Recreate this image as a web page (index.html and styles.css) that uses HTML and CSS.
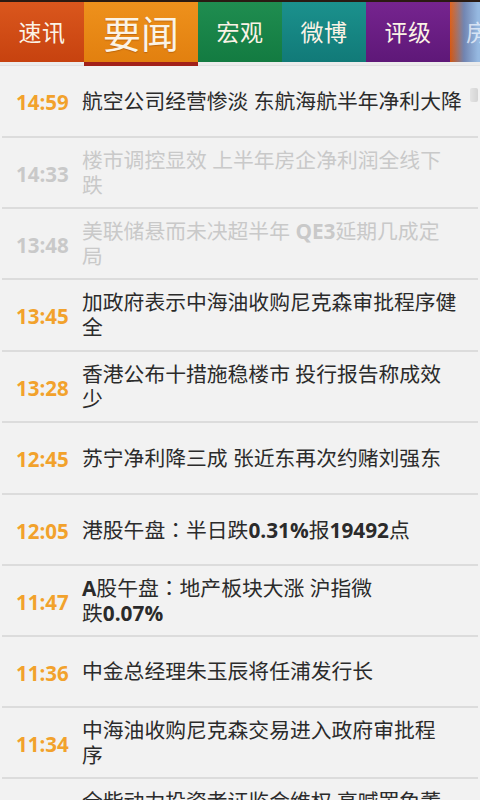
FILE: index.html
```html
<!DOCTYPE html>
<html lang="zh">
<head>
<meta charset="utf-8">
<link rel="stylesheet" href="styles.css">
</head>
<body>
<div class="screen">
  <nav class="tabs">
    <div class="tab t-sx">速讯</div>
    <div class="tab t-yw active">要闻</div>
    <div class="tab t-hg">宏观</div>
    <div class="tab t-wb">微博</div>
    <div class="tab t-pj">评级</div>
    <div class="tab t-more">房产</div>
  </nav>
  <div class="underbar"><span class="marker"></span></div>
  <ul class="list">
    <li class="row"><span class="time">14:59</span><span class="title">航空公司经营惨淡 东航海航半年净利大降</span><span class="scroll"></span></li>
    <li class="row read"><span class="time">14:33</span><span class="title">楼市调控显效 上半年房企净利润全线下<br>跌</span></li>
    <li class="row read"><span class="time">13:48</span><span class="title">美联储悬而未决超半年 <b>QE3</b>延期几成定<br>局</span></li>
    <li class="row"><span class="time">13:45</span><span class="title">加政府表示中海油收购尼克森审批程序健<br>全</span></li>
    <li class="row"><span class="time">13:28</span><span class="title">香港公布十措施稳楼市 投行报告称成效<br>少</span></li>
    <li class="row"><span class="time">12:45</span><span class="title">苏宁净利降三成 张近东再次约赌刘强东</span></li>
    <li class="row"><span class="time">12:05</span><span class="title">港股午盘<span class="colon" lang="ja">：</span>半日跌<b>0.31%</b>报<b>19492</b>点</span></li>
    <li class="row"><span class="time">11:47</span><span class="title"><b>A</b>股午盘<span class="colon" lang="ja">：</span>地产板块大涨 沪指微<br>跌<b>0.07%</b></span></li>
    <li class="row"><span class="time">11:36</span><span class="title">中金总经理朱玉辰将任浦发行长</span></li>
    <li class="row"><span class="time">11:34</span><span class="title">中海油收购尼克森交易进入政府审批程<br>序</span></li>
    <li class="row"><span class="time">11:20</span><span class="title">全柴动力投资者证监会维权 高喊罢免董<br>事长</span></li>
  </ul>
</div>
</body>
</html>
```

FILE: styles.css
```css
* { box-sizing: border-box; }
html, body { margin: 0; padding: 0; }
body {
  width: 480px;
  height: 800px;
  overflow: hidden;
  background: #f2f2f2;
  font-family: "Open Sans", "Noto Sans CJK SC", sans-serif;
}
.screen { width: 480px; height: 800px; overflow: hidden; }

.tabs {
  display: flex;
  height: 62px;
  border-top: 2px solid #2a1a12;
  overflow: hidden;
}
.tab {
  flex: 0 0 84px;
  display: flex;
  align-items: center;
  justify-content: center;
  color: #fbf3e6;
  font-family: "Noto Sans CJK SC", sans-serif;
  font-size: 23px;
  letter-spacing: 0.5px;
  padding-bottom: 2px;
}
.t-sx { background: linear-gradient(#da571d, #c7420f); }
.t-yw {
  flex-basis: 114px;
  font-size: 38px;
  background: linear-gradient(#ee911c, #e2800f);
  text-shadow: 0 1px 1px rgba(120, 50, 0, 0.35);
  letter-spacing: 0;
}
.t-hg { background: linear-gradient(#1f8d50, #137b41); }
.t-wb { background: linear-gradient(#1b918d, #117a78); }
.t-pj { background: linear-gradient(#76248f, #5e1878); }
.t-more {
  flex: 0 0 84px;
  justify-content: flex-start;
  padding-left: 16px;
  color: rgba(235, 242, 252, 0.8);
  background:
    linear-gradient(90deg, rgba(95,140,205,0) 0px, rgba(95,140,205,0.85) 14px, rgba(150,185,225,1) 28px),
    linear-gradient(#e2661e, #d4550f);
}

.underbar {
  height: 4px;
  background: #ececec;
  border-bottom: 1px solid #e2e2e2;
  position: relative;
}
.marker {
  position: absolute;
  left: 84px;
  top: 0;
  width: 114px;
  height: 4px;
  background: #a2211a;
}

.list {
  list-style: none;
  margin: 0;
  padding: 0;
}
.row {
  display: flex;
  align-items: center;
  height: 71px;
  margin: 0 2px;
  border-bottom: 2px solid #dcdcdc;
  position: relative;
}
.row:first-child { height: 72px; }
.row:nth-child(4), .row:nth-child(6) { height: 72px; }
.time {
  flex: 0 0 80px;
  padding-left: 14px;
  font-family: "Open Sans", sans-serif;
  font-weight: 700;
  font-size: 20.5px;
  color: #f2a22c;
  padding-top: 2px;
}
.title {
  font-family: "Open Sans", "Noto Sans CJK SC", sans-serif;
  font-size: 20.8px;
  line-height: 25px;
  color: #2b2b2b;
  white-space: nowrap;
}
.title b { font-weight: 700; }
.colon { font-family: "Noto Sans CJK JP", sans-serif; }
.read .time, .read .title { color: #c9c9c9; }

.scroll {
  position: absolute;
  right: 0;
  top: 22px;
  width: 8px;
  height: 14px;
  background: linear-gradient(90deg, #e4e4e4, #d4d4d4);
  border-radius: 2px;
}
```
